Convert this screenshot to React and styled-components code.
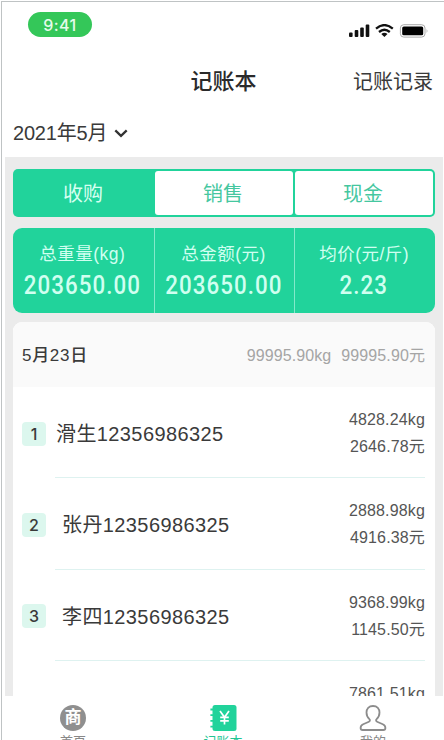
import React, { useState } from "react";
import styled, { createGlobalStyle } from "styled-components";

const tabs = ["收购", "销售", "现金"];

const totals = [
    { label: "总重量(kg)", value: "203650.00" },
    { label: "总金额(元)", value: "203650.00" },
    { label: "均价(元/斤)", value: "2.23" },
];

const records = [
    { name: "滑生12356986325", weight: "4828.24kg", money: "2646.78元", indent: 1 },
    { name: "张丹12356986325", weight: "2888.98kg", money: "4916.38元", indent: 7 },
    { name: "李四12356986325", weight: "9368.99kg", money: "1145.50元", indent: 7 },
    { weight: "7861.51kg" },
];

export default function App() {
    const [selected, setSelected] = useState(0);

    return (
        <>
            <GlobalStyle />
            <Phone>
                <StatusBar>
                    <Clock>9:41</Clock>
                    <StatusIcons />
                </StatusBar>
                <Header>
                    <span />
                    <h1>记账本</h1>
                    <a>记账记录</a>
                </Header>
                <Month>
                    <span>2021年5月</span>
                    <svg width="14" height="9" viewBox="0 0 14 9" fill="none" stroke="#333" strokeWidth="2.3">
                        <path d="M1.3 1.4 L7 6.8 L12.7 1.4" />
                    </svg>
                </Month>
                <Content>
                    <Tabs>
                        {tabs.map((tab, i) => (
                            <Tab key={tab} $active={i === selected} onClick={() => setSelected(i)}>{tab}</Tab>
                        ))}
                    </Tabs>
                    <Totals>
                        {totals.map((total) => (
                            <Total key={total.label}>
                                <p>{total.label}</p>
                                <strong>{total.value}</strong>
                            </Total>
                        ))}
                    </Totals>
                    <Card>
                        <CardHead>
                            <h2>5月23日</h2>
                            <DaySum>
                                <span>99995.90kg</span>
                                <span>99995.90元</span>
                            </DaySum>
                        </CardHead>
                        {records.map((record, i) => (
                            <Record key={i}>
                                {record.name && <Badge>{i + 1}</Badge>}
                                <RecordBody>
                                    <Name $indent={record.indent}>{record.name}</Name>
                                    <Amounts>
                                        <span>{record.weight}</span>
                                        {record.money && <span>{record.money}</span>}
                                    </Amounts>
                                </RecordBody>
                            </Record>
                        ))}
                    </Card>
                </Content>
                <Footer>
                    <FooterItem>
                        <ShopIcon>商</ShopIcon>
                        <p>首页</p>
                    </FooterItem>
                    <FooterItem $active>
                        <BookIcon />
                        <p>记账本</p>
                    </FooterItem>
                    <FooterItem>
                        <UserIcon />
                        <p>我的</p>
                    </FooterItem>
                </Footer>
            </Phone>
        </>
    );
}

function StatusIcons() {
    return (
        <svg width="80" height="14" viewBox="0 0 80 14">
            <g fill="#111">
                <rect x="0" y="8.5" width="3.6" height="4.5" rx="1" />
                <rect x="5.7" y="6" width="3.6" height="7" rx="1" />
                <rect x="11.2" y="3.4" width="3.6" height="9.6" rx="1" />
                <rect x="16.7" y="0.4" width="3.6" height="12.6" rx="1" />
            </g>
            <g fill="none" stroke="#111" strokeWidth="2.3">
                <path d="M27 4.6 Q35.4 -2.4 43.8 4.6" />
                <path d="M30 8 Q35.4 3.4 40.8 8" />
            </g>
            <path d="M32.3 10 Q35.4 7.6 38.5 10 L35.4 13.1 Z" fill="#111" />
            <rect x="51.4" y="0.7" width="24.6" height="12.4" rx="3.4" fill="#fff" stroke="#aaa" />
            <rect x="53.2" y="2.5" width="21" height="8.8" rx="1.6" fill="#000" />
            <path d="M77.6 4.8 Q79.4 6.9 77.6 9 Z" fill="#aaa" />
        </svg>
    );
}

function BookIcon() {
    return (
        <svg width="27" height="26" viewBox="0 0 27 26">
            <rect x="2.5" y="0" width="24" height="26" rx="2.5" fill="#21d39b" />
            <g stroke="#21d39b" strokeWidth="1.8">
                <path d="M0.4 4.5H4M0.4 10.2H4M0.4 15.9H4M0.4 21.6H4" />
            </g>
            <g fill="none" stroke="#fff" strokeWidth="1.7">
                <path d="M10 6 L14.5 12.2 L19 6 M14.5 12 V19.6 M10.2 12.4 H18.8 M10.2 15.8 H18.8" />
            </g>
        </svg>
    );
}

function UserIcon() {
    return (
        <svg width="28" height="26" viewBox="0 0 28 26" fill="none" stroke="#8c8c8c" strokeWidth="1.8" strokeLinejoin="round">
            <path d="M14 1 C9.8 1 7.5 4 7.5 7.6 C7.5 10.6 8.9 12.8 10.4 14.2 C11.3 15 11 16.2 9.9 16.7 L4.2 19.2 C2.4 20 1.6 21.3 1.6 23 C1.6 24.3 2.3 25 3.6 25 H24.4 C25.7 25 26.4 24.3 26.4 23 C26.4 21.3 25.6 20 23.8 19.2 L18.1 16.7 C17 16.2 16.7 15 17.6 14.2 C19.1 12.8 20.5 10.6 20.5 7.6 C20.5 4 18.2 1 14 1 Z" />
        </svg>
    );
}

const GlobalStyle = createGlobalStyle`
    * {
        box-sizing: border-box;
        margin: 0;
        padding: 0;
    }
    body {
        background-color: #fff;
        font-family: "Liberation Sans", "Noto Sans CJK SC", sans-serif;
        color: #3a3a3a;
        overflow: hidden;
    }
`

const Phone = styled.div`
    width: 443px;
    height: 739px;
    margin: 1px 0 0 1px;
    border-top: 1px solid #bfc3c4;
    border-left: 1px solid #bfc3c4;
    display: flex;
    flex-direction: column;
    overflow: hidden;
`

const StatusBar = styled.div`
    height: 46px;
    flex-shrink: 0;
    display: flex;
    justify-content: space-between;
    align-items: flex-start;
    padding: 10px 15px 0 26px;
    svg {
        margin-top: 12px;
    }
`

const Clock = styled.div`
    width: 64px;
    height: 25px;
    border-radius: 13px;
    background-color: #34c759;
    color: #e6fbeb;
    font-family: Inter, sans-serif;
    font-weight: 500;
    font-size: 16px;
    line-height: 26px;
    letter-spacing: 0.4px;
    text-align: center;
`

const Header = styled.div`
    height: 67px;
    flex-shrink: 0;
    display: grid;
    grid-template-columns: 1fr auto 1fr;
    align-items: center;
    padding: 1px 11px 0 12px;
    h1 {
        font-size: 22px;
        font-weight: 500;
        line-height: 32px;
        color: #2a2a2a;
    }
    a {
        justify-self: end;
        font-size: 20px;
        line-height: 30px;
    }
`

const Month = styled.div`
    height: 42px;
    flex-shrink: 0;
    display: flex;
    align-items: center;
    gap: 7px;
    padding: 0 0 6px 11px;
    font-size: 20px;
    line-height: 30px;
    letter-spacing: -0.2px;
`

const Content = styled.div`
    flex: 1;
    min-height: 0;
    overflow: hidden;
    margin: 0 1px 0 3px;
    padding: 12px 8px 0;
    background-color: #ebebeb;
`

const Tabs = styled.div`
    height: 48px;
    display: grid;
    grid-template-columns: repeat(3, 1fr);
    gap: 2px;
    padding: 2px;
    border-radius: 5px;
    background-color: #21d39b;
`

const Tab = styled.button`
    border: none;
    border-radius: 3px;
    padding: 0 2px 1px 0;
    font-family: inherit;
    font-size: 20px;
    cursor: pointer;
    background-color: ${props => props.$active ? '#21d39b' : '#fff'};
    color: ${props => props.$active ? '#d6fff0' : '#45c79f'};
`

const Totals = styled.div`
    height: 85px;
    margin-top: 11px;
    display: grid;
    grid-template-columns: repeat(3, 1fr);
    border-radius: 9px;
    background-color: #21d39b;
`

const Total = styled.div`
    padding: 13px 2px 0 0;
    text-align: center;
    color: #d0fff0;
    & + & {
        border-left: 1px solid #83e9ca;
    }
    p {
        font-size: 17.5px;
        line-height: 27px;
        letter-spacing: 0.5px;
    }
    strong {
        display: block;
        font-family: Roboto, sans-serif;
        font-weight: 500;
        font-size: 26px;
        line-height: 35px;
        letter-spacing: 1.2px;
        transform: scaleX(0.86);
    }
`

const Card = styled.div`
    margin-top: 9px;
    border-radius: 9px 9px 0 0;
    background-color: #fff;
    overflow: hidden;
`

const CardHead = styled.div`
    height: 65px;
    display: flex;
    align-items: center;
    justify-content: space-between;
    padding: 2px 10px 0 9px;
    background-color: #fafafa;
    h2 {
        font-size: 17px;
        font-weight: 500;
        line-height: 26px;
        letter-spacing: 0.7px;
    }
`

const DaySum = styled.div`
    display: flex;
    align-items: baseline;
    gap: 10px;
    padding-bottom: 4px;
    font-size: 16px;
    letter-spacing: 0.1px;
    color: #a5a5a5;
`

const Record = styled.div`
    height: 91.3px;
    display: flex;
    align-items: center;
    padding: 0 10px 0 9px;
`

const Badge = styled.div`
    width: 24px;
    height: 24px;
    margin-top: 2px;
    flex-shrink: 0;
    border-radius: 4px;
    background-color: #dcf7ee;
    font-family: Inter, sans-serif;
    font-weight: 500;
    font-size: 16px;
    line-height: 24px;
    text-align: center;
`

const RecordBody = styled.div`
    flex: 1;
    height: 100%;
    margin-left: 9px;
    display: flex;
    align-items: flex-start;
    justify-content: space-between;
    border-bottom: 1px solid #def2f0;
`

const Name = styled.span`
    margin-left: ${props => props.$indent}px;
    padding-top: 32px;
    font-size: 20px;
    line-height: 30px;
    letter-spacing: 0.4px;
`

const Amounts = styled.div`
    display: flex;
    flex-direction: column;
    align-items: flex-end;
    padding-top: 19px;
    font-size: 16px;
    line-height: 27px;
    letter-spacing: 0.15px;
    color: #555;
`

const Footer = styled.div`
    height: 44px;
    flex-shrink: 0;
    display: grid;
    grid-template-columns: repeat(3, 150px);
    justify-content: center;
    padding-top: 9px;
    overflow: hidden;
    background-color: #fff;
`

const FooterItem = styled.div`
    display: flex;
    flex-direction: column;
    align-items: center;
    p {
        margin-top: 1px;
        font-size: 13px;
        line-height: 20px;
        color: ${props => props.$active ? '#21c592' : '#888'};
    }
`

const ShopIcon = styled.div`
    width: 26px;
    height: 26px;
    border-radius: 50%;
    background-color: #8f8f8f;
    color: #fff;
    font-size: 17px;
    font-weight: 700;
    line-height: 25px;
    text-align: center;
`
